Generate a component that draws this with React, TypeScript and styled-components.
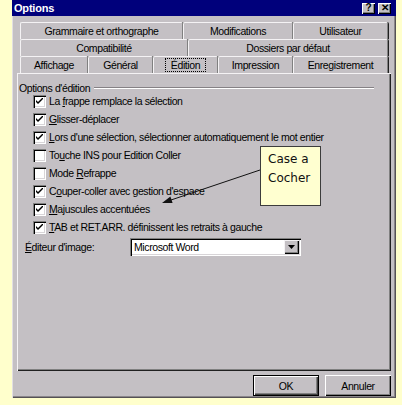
import React from "react";
import styled, { createGlobalStyle } from "styled-components";

const GlobalStyle = createGlobalStyle`
  html, body { margin: 0; padding: 0; background: #ffffcc; }
  body {
    font-family: "Liberation Sans", Arial, sans-serif;
    font-size: 10.5px;
    color: #000;
  }
`;

const GRAY = "#c4c0c4";
const TIGHT = "-0.4px";

const Page = styled.div`
  width: 402px;
  height: 405px;
  padding-left: 12px;
  box-sizing: border-box;
`;

const Window = styled.div`
  position: relative;
  width: 384px;
  height: 398px;
  box-sizing: border-box;
  background: ${GRAY};
  box-shadow: inset 1px 0 #e2dfe2, inset -1px -1px #555155, inset -2px -2px #8a868a;
  display: flex;
  flex-direction: column;
`;

const TitleBar = styled.div`
  height: 16px;
  background: #00007b;
  display: flex;
  align-items: center;
  justify-content: space-between;
  padding: 0 5px 0 2px;
`;

const TitleText = styled.span`
  color: #fff;
  font-weight: bold;
  font-size: 11px;
  letter-spacing: -0.2px;
`;

const TitleButtons = styled.div`
  display: flex;
  gap: 3px;
`;

const TitleButton = styled.div`
  width: 13px;
  height: 11px;
  background: ${GRAY};
  box-shadow: inset 1px 1px #fff, inset -1px -1px #000, inset -2px -2px #808080;
  display: flex;
  align-items: center;
  justify-content: center;
  font-size: 10px;
  font-weight: bold;
  line-height: 1;
`;

const Body = styled.div`
  flex: 1;
  display: flex;
  flex-direction: column;
  padding: 6px 5px 0 5px;
`;

const TabArea = styled.div`
  display: flex;
  flex-direction: column;
  padding: 0 3px;
`;

const TabRow = styled.div`
  display: flex;
  height: 17px;
`;

const Tab = styled.div<{ $w: number }>`
  width: ${(p) => p.$w}px;
  box-sizing: border-box;
  display: flex;
  align-items: center;
  justify-content: center;
  border-top: 1px solid #f4f2f4;
  border-left: 1px solid #f4f2f4;
  border-right: 1px solid #808080;
  box-shadow: 1px 0 0 #202020;
  border-radius: 2px 2px 0 0;
  letter-spacing: ${TIGHT};
  white-space: nowrap;
`;

const FocusLabel = styled.span`
  outline: 1px dotted #000;
  padding: 0 5px;
  line-height: 12px;
`;

const Panel = styled.div`
  height: 298px;
  box-sizing: border-box;
  box-shadow: inset 1px 1px #f4f2f4, inset -1px -1px #202020, inset -2px -2px #808080;
  display: flex;
  flex-direction: column;
  padding: 10px 17px 0 2px;
`;

const GroupHeader = styled.div`
  display: flex;
  align-items: center;
  height: 10px;
  line-height: 10px;
  letter-spacing: ${TIGHT};
`;

const GroupLine = styled.div`
  flex: 1;
  margin-left: 4px;
  border-top: 1px solid #858185;
  border-bottom: 1px solid #fff;
`;

const CheckList = styled.div`
  display: flex;
  flex-direction: column;
  gap: 2px;
  padding-left: 14px;
`;

const CheckRow = styled.label`
  display: flex;
  align-items: center;
  height: 16px;
  gap: 3px;
  letter-spacing: ${TIGHT};
  white-space: nowrap;
`;

const Box = styled.span`
  width: 13px;
  height: 13px;
  box-sizing: border-box;
  background: #fff;
  box-shadow: inset 1px 1px #808080, inset 2px 2px #000, inset -1px -1px #fff, inset -2px -2px #d8d5d8;
  display: flex;
  align-items: center;
  justify-content: center;
  flex: none;
`;

const EditorRow = styled.div`
  display: flex;
  align-items: center;
  margin-top: 3px;
  padding-left: 6px;
  letter-spacing: ${TIGHT};
`;

const EditorLabel = styled.span`
  width: 105px;
`;

const Combo = styled.div`
  width: 171px;
  height: 18px;
  box-sizing: border-box;
  background: #fff;
  box-shadow: inset 1px 1px #808080, inset 2px 2px #000, inset -1px -1px #fff, inset -2px -2px #d8d5d8;
  display: flex;
  align-items: center;
  justify-content: space-between;
  padding: 2px 2px 2px 4px;
`;

const ComboButton = styled.div`
  width: 15px;
  height: 14px;
  background: ${GRAY};
  box-shadow: inset 1px 1px #f4f2f4, inset -1px -1px #000, inset -2px -2px #808080;
  display: flex;
  align-items: center;
  justify-content: center;
`;

const Footer = styled.div`
  display: flex;
  justify-content: flex-end;
  gap: 6px;
  margin-top: 4px;
`;

const Button = styled.div<{ $default?: boolean }>`
  width: 66px;
  height: 21px;
  box-sizing: border-box;
  background: ${GRAY};
  display: flex;
  align-items: center;
  justify-content: center;
  letter-spacing: ${TIGHT};
  box-shadow: ${(p) =>
    p.$default
      ? "inset 1px 1px #000, inset -1px -1px #000, inset 2px 2px #fff, inset -2px -2px #404040, inset -3px -3px #808080"
      : "inset 1px 1px #fff, inset -1px -1px #000, inset -2px -2px #808080"};
`;

const Note = styled.div`
  position: absolute;
  left: 248px;
  top: 146px;
  width: 61px;
  height: 60px;
  box-sizing: border-box;
  background: #ffffd0;
  border: 1px solid #3c3c3c;
  padding: 3px 0 0 7px;
  font-family: "DejaVu Sans", sans-serif;
  font-size: 12px;
  line-height: 19px;
  color: #111;
`;

const ArrowLayer = styled.svg`
  position: absolute;
  left: 0;
  top: 0;
  pointer-events: none;
`;

const Check = () => (
  <svg width="7" height="7" viewBox="0 0 7 7">
    <path d="M0 2 L2 4 L7 -1 L7 1 L2 6 L0 4 Z" fill="#000" />
  </svg>
);

type Item = { pre: string; key: string; post: string; checked: boolean };

const items: Item[] = [
  { pre: "La ", key: "f", post: "rappe remplace la sélection", checked: true },
  { pre: "", key: "G", post: "lisser-déplacer", checked: true },
  { pre: "", key: "L", post: "ors d'une sélection, sélectionner automatiquement le mot entier", checked: true },
  { pre: "To", key: "u", post: "che INS pour Edition Coller", checked: false },
  { pre: "Mode ", key: "R", post: "efrappe", checked: false },
  { pre: "C", key: "o", post: "uper-coller avec gestion d'espace", checked: true },
  { pre: "", key: "M", post: "ajuscules accentuées", checked: true },
  { pre: "", key: "T", post: "AB et RET.ARR. définissent les retraits à gauche", checked: true },
];

const rows: { label: string; w: number; selected?: boolean }[][] = [
  [
    { label: "Grammaire et orthographe", w: 163 },
    { label: "Modifications", w: 110 },
    { label: "Utilisateur", w: 95 },
  ],
  [
    { label: "Compatibilité", w: 168 },
    { label: "Dossiers par défaut", w: 200 },
  ],
  [
    { label: "Affichage", w: 68 },
    { label: "Général", w: 65 },
    { label: "Édition", w: 65, selected: true },
    { label: "Impression", w: 75 },
    { label: "Enregistrement", w: 95 },
  ],
];

export default function App() {
  return (
    <>
      <GlobalStyle />
      <Page>
        <Window>
          <TitleBar>
            <TitleText>Options</TitleText>
            <TitleButtons>
              <TitleButton>?</TitleButton>
              <TitleButton>✕</TitleButton>
            </TitleButtons>
          </TitleBar>
          <Body>
            <TabArea>
              {rows.map((row, i) => (
                <TabRow key={i}>
                  {row.map((t) => (
                    <Tab key={t.label} $w={t.w}>
                      {t.selected ? <FocusLabel>{t.label}</FocusLabel> : t.label}
                    </Tab>
                  ))}
                </TabRow>
              ))}
            </TabArea>
            <Panel>
              <GroupHeader>
                <span>Options d'édition</span>
                <GroupLine />
              </GroupHeader>
              <CheckList>
                {items.map((it, i) => (
                  <CheckRow key={i}>
                    <Box>{it.checked && <Check />}</Box>
                    <span>
                      {it.pre}
                      <u>{it.key}</u>
                      {it.post}
                    </span>
                  </CheckRow>
                ))}
              </CheckList>
              <EditorRow>
                <EditorLabel>
                  <u>É</u>diteur d'image:
                </EditorLabel>
                <Combo>
                  <span>Microsoft Word</span>
                  <ComboButton>
                    <svg width="7" height="4" viewBox="0 0 7 4">
                      <path d="M0 0 H7 L3.5 4 Z" fill="#000" />
                    </svg>
                  </ComboButton>
                </Combo>
              </EditorRow>
            </Panel>
            <Footer>
              <Button $default>OK</Button>
              <Button>Annuler</Button>
            </Footer>
          </Body>
          <Note>
            Case a
            <br />
            Cocher
          </Note>
          <ArrowLayer width="384" height="398">
            <line x1="248" y1="170" x2="156" y2="201" stroke="#111" strokeWidth="1" />
            <polygon points="150,203 160.6,203.1 158.4,196.5" fill="#111" />
          </ArrowLayer>
        </Window>
      </Page>
    </>
  );
}
